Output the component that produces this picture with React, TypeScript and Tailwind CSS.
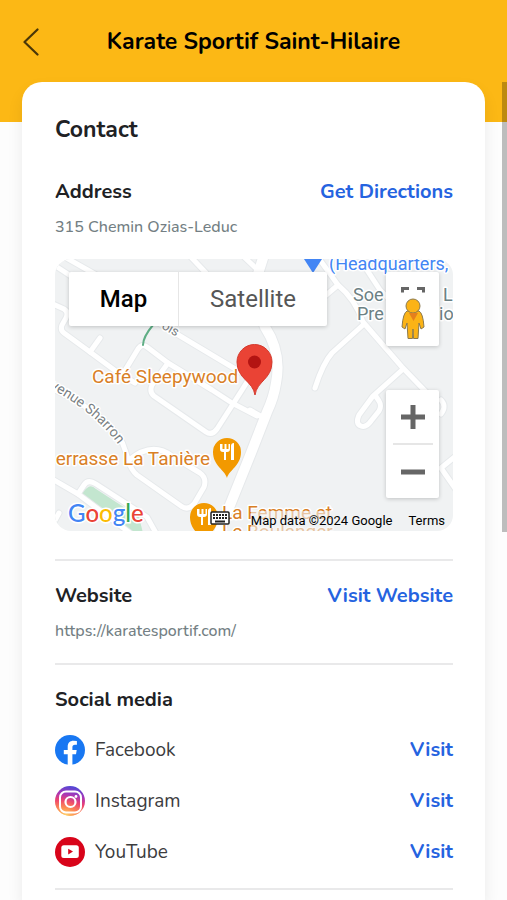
import type { ReactNode } from 'react';

const roads = [
  'M-4 4 L28 25 L60 46',
  'M8 -3 L45 18',
  'M-2 45 L9 50 Q14 53 11 59 L7 66 Q5 71 9 74 L35 93 L62 113 L80 124',
  'M35 93 L45 79',
  'M66 118 L83 90 Q87 84 92 88 L113 104 L157 131 L177 144 L202 157',
  'M113 104 L97 126 Q94 133 99 137 L151 173 Q157 177 162 170 L187 131 L200 110',
  'M100 62 L187 114',
  'M134 -4 L151 14',
  'M187 -4 L206 14',
  'M195 151 L209 159',
  'M260 -6 L283 26 Q300 40 308 63 L347 108 L372 134',
  'M283 26 L270 37',
  'M308 66 L277 94 Q268 104 260 129',
  'M347 111 L318 137 L304 156 Q300 165 306 167 Q311 169 316 162 L324 152 Q327 147 324 142 L320 136',
  'M312 11 L325 31 L336 42',
  'M402 196 L386 209 L402 232',
  'M386 141 Q392 147 386 155',
  'M-3 220 L23 235 L75 274',
  'M23 235 L29 226 Q33 220 41 225 L92 258 L101 274',
  'M4 254 L-2 265',
  'M-6 128 Q62 160 70 191 L74 203 Q76 211 82 216 L126 247 Q133 252 139 245 L149 228 Q152 219 145 214 L117 197 Q97 182 74 201',
];

const mainRoad = 'M209 -4 L202 18 Q200 45 210 68 Q227 94 221 124 Q219 138 212 153 L196 194 L171 256 L163 276';

function ForkPin() {
  return (
    <>
      <path d="M0 28 C-2 20 -14 16 -14 2 A14 14 0 1 1 14 2 C14 16 2 20 0 28Z" fill="#f29900" />
      <path d="M-7 -6v5q0 3 3 3h1v8h2V2h1q3 0 3-3v-5h-1.500v5h-2v-5h-2v5h-2v-5zM4 10V-4q0-3 3-3V10h-1.500V3H5.500v7z" fill="#fff" />
    </>
  );
}

function MapCanvas() {
  return (
    <svg viewBox="0 0 398 272" preserveAspectRatio="xMidYMid slice" className="block size-full" role="img" aria-label="Map of the club's neighbourhood">
      <rect width="398" height="272" fill="#f0f2f3" />
      <path d="M25 235 L32 229 Q36 225 41 230 L84 258 L88 274 H80Z" fill="#c3e6cf" />
      <g fill="none" strokeLinecap="round" strokeLinejoin="round">
        {roads.map((d) => <path key={d} d={d} stroke="#e6e9eb" strokeWidth="7" />)}
        <path d={mainRoad} stroke="#e6e9eb" strokeWidth="12" />
        {roads.map((d) => <path key={d} d={d} stroke="#fff" strokeWidth="5" />)}
        <path d={mainRoad} stroke="#fff" strokeWidth="10" />
        <path d="M98 66 Q88 78 88 86" stroke="#5fae85" strokeWidth="2" />
      </g>
      <path id="sharron" d="M-13 125 Q46 155 70 196" fill="none" />
      <g className="font-['Roboto',sans-serif]" stroke="#fff" strokeWidth="3" strokeLinejoin="round" paintOrder="stroke">
        <text fontSize="14" fill="#7a7f83"><textPath href="#sharron">Avenue Sharron</textPath></text>
        <text fontSize="13" fill="#7a7f83" transform="translate(106 69) rotate(30)">ois</text>
        <text x="37" y="124" fontSize="19" fill="#d98026">Café Sleepywood</text>
        <text x="155" y="206" textAnchor="end" fontSize="19" fill="#d98026">errasse La Tanière</text>
        <text x="274" y="11" fontSize="18" fill="#4285f4">(Headquarters,</text>
        <g fontSize="18" fill="#6c8184">
          <text x="298" y="42">Soe</text>
          <text x="388" y="42">L</text>
          <text x="302" y="61">Pre</text>
          <text x="384" y="61">io</text>
        </g>
        <text x="167" y="260" fontSize="19" fill="#d98026">La Femme et</text>
        <text x="167" y="279" fontSize="19" fill="#d98026">Le Boulanger</text>
      </g>
      <path d="M249 0 H267 L258 14Z" fill="#4285f4" />
      <g transform="translate(172 191)"><ForkPin /></g>
      <g transform="translate(149 256)"><ForkPin /></g>
      <path d="M200 136 C198 122 182 120 182 103 A17.500 17.500 0 1 1 217 103 C217 120 202 122 200 136Z" fill="#ea4335" stroke="#d33a2d" />
      <circle cx="199.500" cy="103" r="6.500" fill="#b31412" />
    </svg>
  );
}

function Pegman() {
  return (
    <svg viewBox="0 0 26 54" className="h-[54px] w-[26px]" aria-hidden="true">
      <path d="M2.500 6.500V2.500H9M17 2.500H23.500V6.500" fill="none" stroke="#666" strokeWidth="3" />
      <g fill="#fbb316" stroke="#8b7a4f" strokeWidth="1">
        <path d="M7 25 Q3 27 2 41 L5 43 L7 37 L8 52.500 H12.500 L13 43 L13.500 52.500 H18 L19 37 L21 43 L24 41 Q23 27 19 25Z" />
        <circle cx="13" cy="20" r="7" />
      </g>
      <path d="M9 27 H18 L13.500 35Z" fill="#e5801c" />
    </svg>
  );
}

function Keyboard() {
  return (
    <svg viewBox="0 0 20 14" className="h-[14px] w-5" aria-hidden="true">
      <rect x="1" y="1" width="18" height="12" rx="1" fill="#fff" stroke="#222" strokeWidth="1.500" />
      <path d="M3 4H17M3 7H17" stroke="#222" strokeWidth="2" strokeDasharray="2 1" />
      <path d="M5 10.500H15" stroke="#222" strokeWidth="2" />
    </svg>
  );
}

function FacebookIcon() {
  return (
    <svg viewBox="0 0 30 30" className="size-[30px]" aria-hidden="true">
      <circle cx="15" cy="15" r="15" fill="#1877f2" />
      <path d="M12.700 30V19.300H8.800V15H12.700V11.700C12.700 7.900 15 5.800 18.500 5.800Q20.200 5.800 21.900 6.100V9.800H20C18.100 9.800 17.400 11 17.400 12.200V15H21.700L21 19.300H17.400V30Z" fill="#fff" />
    </svg>
  );
}

function InstagramIcon() {
  return (
    <svg viewBox="0 0 30 30" className="size-[30px]" aria-hidden="true">
      <defs>
        <linearGradient id="ig-sky" x1="0.600" y1="0" x2="0.400" y2="1">
          <stop offset="0" stopColor="#4a49d8" />
          <stop offset="0.300" stopColor="#a637b8" />
          <stop offset="0.550" stopColor="#ec3f72" />
          <stop offset="0.800" stopColor="#fb8b55" />
          <stop offset="1" stopColor="#fed574" />
        </linearGradient>
        <radialGradient id="ig-sun" cx="0.350" cy="1" r="0.700">
          <stop offset="0" stopColor="#fed86f" />
          <stop offset="0.400" stopColor="#fd9150" stopOpacity="0.800" />
          <stop offset="1" stopColor="#f0446c" stopOpacity="0" />
        </radialGradient>
      </defs>
      <circle cx="15" cy="15" r="15" fill="url(#ig-sky)" />
      <circle cx="15" cy="15" r="15" fill="url(#ig-sun)" />
      <rect x="5" y="5.500" width="21" height="21" rx="6" fill="none" stroke="#fff" strokeWidth="2" />
      <circle cx="15.500" cy="16" r="5" fill="none" stroke="#fff" strokeWidth="2.200" />
      <circle cx="21" cy="10.500" r="1.400" fill="#fff" />
    </svg>
  );
}

function YouTubeIcon() {
  return (
    <svg viewBox="0 0 30 30" className="size-[30px]" aria-hidden="true">
      <circle cx="15" cy="15" r="15" fill="#d8041a" />
      <rect x="6.300" y="8.300" width="17.500" height="12.600" rx="2.500" fill="#fff" />
      <path d="M13.200 11.800L18 14.600L13.200 17.400Z" fill="#d8041a" />
    </svg>
  );
}

const socials: { name: string; icon: ReactNode }[] = [
  { name: 'Facebook', icon: <FacebookIcon /> },
  { name: 'Instagram', icon: <InstagramIcon /> },
  { name: 'YouTube', icon: <YouTubeIcon /> },
];

function SectionHead({ title, link }: { title: string; link?: string }) {
  return (
    <div className="flex items-center justify-between text-[20px] leading-[30px] font-bold">
      <h3 className="text-[#202124]">{title}</h3>
      {link && <a href="#" className="text-[#2563e0]">{link}</a>}
    </div>
  );
}

export default function App() {
  return (
    <div className="relative flex min-h-screen flex-col overflow-hidden bg-[#fdfdfd] font-['Nunito','Open_Sans',sans-serif]">
      <header className="flex h-[122px] shrink-0 items-start bg-[#fcb815] px-[15px] pt-6">
        <button type="button" aria-label="Back" className="flex h-9 w-8 items-center justify-center">
          <svg viewBox="0 0 16 28" className="h-7 w-4" fill="none" stroke="#4a3708" strokeWidth="2.200" strokeLinecap="round" strokeLinejoin="round" aria-hidden="true">
            <path d="M14.500 1.500L1.500 14L14.500 26.500" />
          </svg>
        </button>
        <h1 className="flex-1 pr-8 text-center text-[23px] leading-9 font-bold text-black">Karate Sportif Saint-Hilaire</h1>
      </header>

      <main className="relative -mt-10 mr-[22px] ml-[22px] flex-1 rounded-t-[20px] bg-white pr-8 pl-[33px] pt-[33px] shadow-[0_8px_16px_rgba(0,0,0,0.08)]">
        <h2 className="text-[23px] leading-[30px] font-bold text-[#202124]">Contact</h2>

        <section className="mt-8">
          <SectionHead title="Address" link="Get Directions" />
          <p className="mt-2 text-[16px] leading-6 font-medium text-[#747f84]">315 Chemin Ozias-Leduc</p>
          <div className="relative mt-5 h-[272px] overflow-hidden rounded-2xl font-['Roboto',sans-serif]">
            <MapCanvas />
            <div className="absolute top-[13px] left-[14px] flex h-[54px] divide-x divide-[#e6e6e6] rounded-xs bg-white text-[24px] shadow-[0_1px_4px_rgba(0,0,0,0.2)]">
              <button type="button" className="w-[110px] font-medium text-black">Map</button>
              <button type="button" className="w-[148px] text-[#565656]">Satellite</button>
            </div>
            <button type="button" aria-label="Street View" className="absolute top-[13px] right-[14px] flex h-[74px] w-[53px] items-end justify-center rounded-xs bg-white pb-[6px] shadow-[0_1px_4px_rgba(0,0,0,0.2)]">
              <Pegman />
            </button>
            <div className="absolute top-[131px] right-[14px] flex w-[53px] flex-col items-center rounded-xs bg-white shadow-[0_1px_4px_rgba(0,0,0,0.2)]">
              <button type="button" aria-label="Zoom in" className="flex h-[53px] w-full items-center justify-center">
                <svg viewBox="0 0 24 24" className="size-6" aria-hidden="true"><path d="M12 0V24M0 12H24" stroke="#666" strokeWidth="5" /></svg>
              </button>
              <span className="h-[2px] w-10 bg-[#e6e6e6]" />
              <button type="button" aria-label="Zoom out" className="flex h-[53px] w-full items-center justify-center">
                <svg viewBox="0 0 24 24" className="size-6" aria-hidden="true"><path d="M0 12H24" stroke="#666" strokeWidth="5" /></svg>
              </button>
            </div>
            <a href="#" aria-label="Google" className="absolute bottom-0 left-[13px] font-['Lato',sans-serif] text-[24px] leading-9 font-medium [-webkit-text-stroke:3px_#fff] [paint-order:stroke]">
              <span className="text-[#4285f4]">G</span><span className="text-[#ea4335]">o</span><span className="text-[#fbbc04]">o</span><span className="text-[#4285f4]">g</span><span className="text-[#34a853]">l</span><span className="text-[#ea4335]">e</span>
            </a>
            <div className="absolute right-0 bottom-0 flex h-5 items-center pr-2 text-[13px] text-black">
              <button type="button" aria-label="Keyboard shortcuts" className="mr-[21px] pb-[7px]"><Keyboard /></button>
              <span className="bg-[#f0f2f3]/60">Map data ©2024 Google</span>
              <a href="#" className="ml-4">Terms</a>
            </div>
          </div>
        </section>

        <section className="mt-7 border-t-2 border-[#e9e9ea] pt-5">
          <SectionHead title="Website" link="Visit Website" />
          <p className="mt-2 text-[16px] leading-6 font-medium text-[#747f84]">https://karatesportif.com/</p>
        </section>

        <section className="mt-5 border-y-2 border-[#e9e9ea] pt-5 pb-[21px]">
          <SectionHead title="Social media" />
          <ul className="mt-5 flex flex-col gap-[21px]">
            {socials.map(({ name, icon }) => (
              <li key={name} className="flex h-[30px] items-center">
                {icon}
                <span className="ml-[10px] text-[19px] text-[#3c3c3e]">{name}</span>
                <a href="#" aria-label={`Visit ${name}`} className="ml-auto text-[20px] font-bold text-[#2563e0]">Visit</a>
              </li>
            ))}
          </ul>
        </section>
      </main>

      <div aria-hidden="true" className="absolute top-[82px] right-0 h-[450px] w-[5px] bg-black/25" />
    </div>
  );
}
